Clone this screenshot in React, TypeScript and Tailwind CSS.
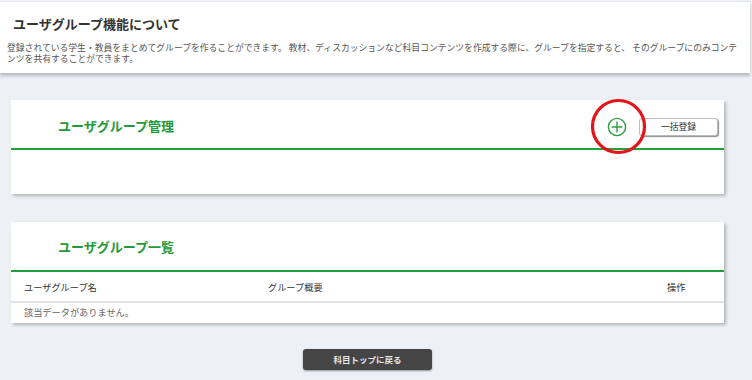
const jp = "font-['Noto_Sans_CJK_JP','Noto_Sans',sans-serif]";

function PlusCircle() {
  return (
    <svg width="20" height="20" viewBox="0 0 20 20" className="block">
      <circle cx="10" cy="10" r="8.6" fill="none" stroke="#2f9e44" strokeWidth="1.4" />
      <path d="M10 4.6v10.8M4.6 10h10.8" stroke="#2f9e44" strokeWidth="1.4" />
    </svg>
  );
}

export default function App() {
  return (
    <div className={`${jp} relative w-[752px] h-[380px] bg-[#edf1f5] overflow-hidden`}>
      {/* about */}
      <section className="mt-px mr-[2px] h-[72px] bg-white border-t border-[#e2e6ea] shadow-[0_3px_3px_rgba(0,0,0,0.22)]">
        <h1 className="pl-[13px] pt-[14px] text-[13px] leading-[16px] font-bold text-[#333]">
          ユーザグループ機能について
        </h1>
        <p className="pl-[7px] pr-[6px] pt-[10px] text-[8.8px] leading-[11px] text-[#555]">
          登録されている学生・教員をまとめてグループを作ることができます。 教材、ディスカッションなど科目コンテンツを作成する際に、グループを指定すると、 そのグループにのみコンテンツを共有することができます。
        </p>
      </section>

      <div className="ml-[11px] w-[713px] flex flex-col">
        {/* management */}
        <section className="mt-[27px] h-[94px] bg-white shadow-[2px_2px_3px_rgba(0,0,0,0.25)]">
          <div className="h-[50px] flex items-center pl-[47px] pr-[6px] border-b-2 border-[#22a13a]">
            <h2 className="pt-[4px] text-[13px] font-bold text-[#23993a]">ユーザグループ管理</h2>
            <div className="ml-auto flex items-center gap-[12px] pt-[6px]">
              <PlusCircle />
              <button className="w-[79px] h-[18px] bg-white rounded-[3px] border border-[#bbb] shadow-[1px_1px_1px_rgba(0,0,0,0.45)] text-[8.8px] text-[#333]">
                一括登録
              </button>
            </div>
          </div>
        </section>

        {/* list */}
        <section className="mt-[28px] bg-white shadow-[2px_2px_3px_rgba(0,0,0,0.25)]">
          <div className="h-[50px] flex items-center pl-[47px] border-b-2 border-[#22a13a]">
            <h2 className="pt-[2px] text-[13px] font-bold text-[#23993a]">ユーザグループ一覧</h2>
          </div>
          <div className="h-[31px] flex items-end pb-[6px] pl-[13px] text-[9.2px] text-[#333] border-b-2 border-[#e1e1e1]">
            <span className="w-[244px]">ユーザグループ名</span>
            <span className="flex-1">グループ概要</span>
            <span className="w-[57px]">操作</span>
          </div>
          <div className="h-[20px] flex items-center pl-[13px] text-[9.2px] text-[#666]">
            該当データがありません。
          </div>
        </section>

        <div className="mt-[26px] flex justify-center">
          <button className="w-[129px] h-[21px] rounded-[3px] bg-[#454545] shadow-[0_1px_2px_rgba(0,0,0,0.4)] text-[8.5px] font-bold text-[#e6e6e6]">
            科目トップに戻る
          </button>
        </div>
      </div>

      {/* annotation */}
      <svg className="absolute left-[590px] top-[98px]" width="57" height="57" viewBox="0 0 57 57">
        <circle cx="28.5" cy="28.5" r="26" fill="none" stroke="#e4141b" strokeWidth="3.2" />
      </svg>
    </div>
  );
}
